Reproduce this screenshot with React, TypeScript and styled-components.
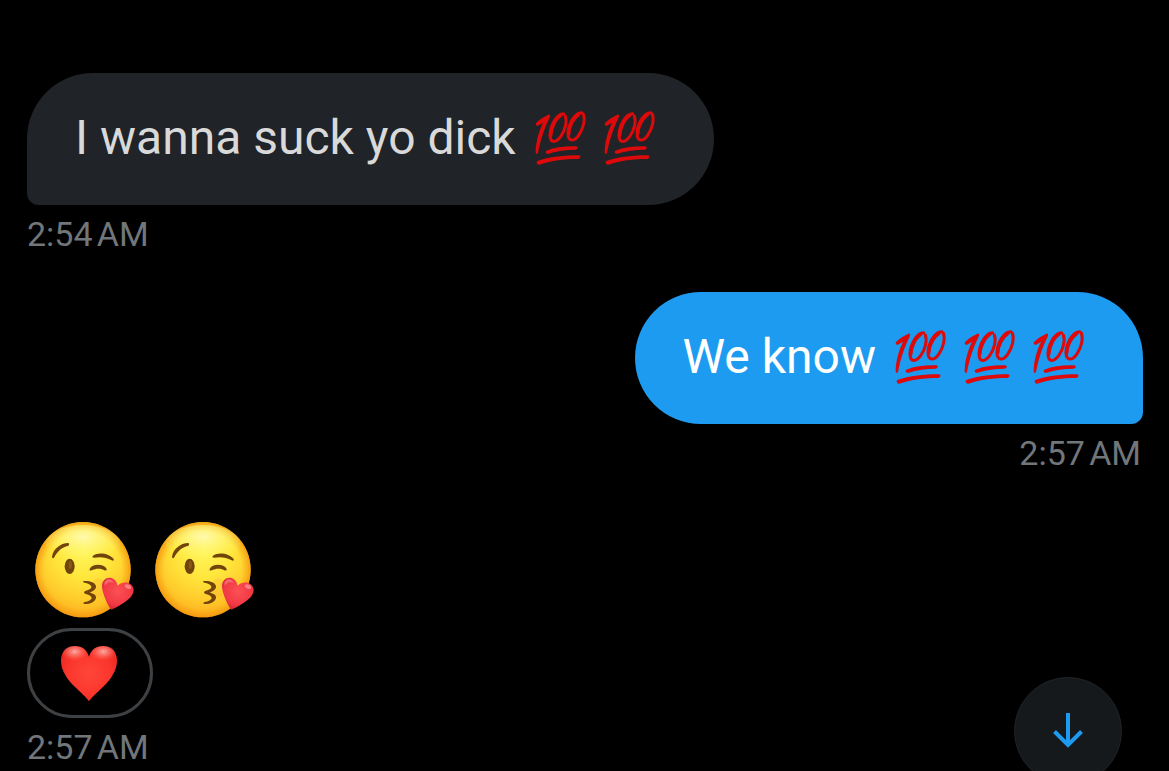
import React from "react";
import styled, { createGlobalStyle } from "styled-components";

const GlobalStyle = createGlobalStyle`
  * { box-sizing: border-box; }
  body { margin: 0; background: #000; font-family: Roboto, "Liberation Sans", sans-serif; }
`;

const Conversation = styled.main`
  display: flex;
  flex-direction: column;
  gap: 38px;
  padding: 73px 26px 0 27px;
`;

const Message = styled.article<{ $sent?: boolean }>`
  display: flex;
  flex-direction: column;
  align-items: ${(p) => (p.$sent ? "flex-end" : "flex-start")};
`;

const Bubble = styled.div<{ $sent?: boolean }>`
  display: flex;
  align-items: center;
  gap: 16px;
  padding: 36px 56px 38px 48px;
  border-radius: ${(p) => (p.$sent ? "66px 66px 12px 66px" : "66px 66px 66px 12px")};
  background: ${(p) => (p.$sent ? "#1d9bf0" : "#202327")};
  color: ${(p) => (p.$sent ? "#fff" : "#d9d9d9")};
  font-size: 48px;
  line-height: 58px;
`;

const EmojiRow = styled.span<{ $gap: number }>`
  display: flex;
  gap: ${(p) => p.$gap}px;
`;

const BigEmoji = styled.div`
  padding: 9px 0 10px 8px;
`;

const Time = styled.time`
  margin-top: 9px;
  padding: 0 2px 0 0;
  color: #71767b;
  font-size: 34px;
  line-height: 40px;
`;

const Reaction = styled.button`
  display: flex;
  align-items: center;
  justify-content: center;
  width: 126px;
  height: 90px;
  padding: 0 2px 0 0;
  border: 3px solid #3e4144;
  border-radius: 45px;
  background: #000;
`;

const ScrollDown = styled.button`
  position: fixed;
  right: 47px;
  bottom: -14px;
  display: flex;
  align-items: center;
  justify-content: center;
  width: 108px;
  height: 108px;
  padding: 0;
  border: 1px solid #202327;
  border-radius: 50%;
  background: #15191c;
`;

const Hundred = () => (
  <svg width="57" height="57" viewBox="0 4 171 171" role="img" aria-label="100">
    <g fill="#dc0a0a">
      <path d="M13 42 C22 32 36 24 49 18 C54 17 56 22 53 27 C38 56 25 94 18 133 C17 137 11 137 11 131 C11 102 20 69 33 42 C28 44 23 48 18 51 C12 53 9 47 13 42Z" />
      <path d="M43 126 C70 115 101 112 133 113 C140 116 138 121 131 123 C102 123 74 127 50 135 C43 137 38 130 43 126Z" />
      <path d="M16 157 C52 144 97 140 142 140 C148 143 146 149 139 151 C97 151 60 155 22 168 C15 169 12 161 16 157Z" />
    </g>
    <g fill="none" stroke="#dc0a0a" strokeLinecap="round" strokeLinejoin="round">
      <path d="M95 15 C73 15 55 53 54 78 C54 105 72 103 86 84 C100 64 106 38 100 22" strokeWidth="9" />
      <path d="M86 20 C69 31 56 60 56 80" strokeWidth="11" />
      <path d="M149 12 C127 13 109 48 108 74 C108 100 126 100 140 80 C155 59 160 32 154 16" strokeWidth="9" />
      <path d="M140 17 C124 27 110 54 110 75" strokeWidth="11" />
    </g>
  </svg>
);

const Kiss = ({ id }: { id: string }) => (
  <svg width="100" height="98" viewBox="21 15 300 294" role="img" aria-label="Face blowing a kiss">
    <defs>
      <radialGradient id={`${id}-skin`} gradientUnits="userSpaceOnUse" cx="168" cy="105" r="215">
        <stop offset="0" stopColor="#fff65c" />
        <stop offset="0.38" stopColor="#ffe63c" />
        <stop offset="0.7" stopColor="#ffcb2b" />
        <stop offset="1" stopColor="#fba51a" />
      </radialGradient>
      <radialGradient id={`${id}-rim`} gradientUnits="userSpaceOnUse" cx="165" cy="166" r="145">
        <stop offset="0.8" stopColor="#f69a10" stopOpacity="0" />
        <stop offset="1" stopColor="#f39009" stopOpacity="0.8" />
      </radialGradient>
      <radialGradient id={`${id}-shine`} cx="0.5" cy="0.3" r="0.65">
        <stop offset="0" stopColor="#fffcc8" stopOpacity="0.8" />
        <stop offset="0.5" stopColor="#fff98c" stopOpacity="0.45" />
        <stop offset="1" stopColor="#fff45a" stopOpacity="0" />
      </radialGradient>
      <radialGradient id={`${id}-heart`} cx="0.5" cy="0.42" r="0.65">
        <stop offset="0" stopColor="#fb5055" />
        <stop offset="0.65" stopColor="#f23a44" />
        <stop offset="1" stopColor="#cc1c2c" />
      </radialGradient>
    </defs>
    <circle cx="165" cy="164" r="143" fill={`url(#${id}-skin)`} />
    <circle cx="165" cy="164" r="143" fill={`url(#${id}-rim)`} />
    <ellipse cx="165" cy="88" rx="112" ry="58" fill={`url(#${id}-shine)`} />
    <ellipse cx="211" cy="218" rx="22" ry="28" fill="#f79038" opacity="0.15" />
    <g fill="#70440b">
      <path d="M72 127 C73 103 98 84 121 84 C125 85 124 91 120 93 C101 97 89 108 78 128 C76 130 72 130 72 127Z" />
      <path d="M195 122 C211 110 244 115 257 132 C259 136 255 139 251 136 C235 126 216 125 198 128 C194 128 192 125 195 122Z" />
      <ellipse cx="125" cy="154" rx="15" ry="23" />
      <path d="M185 162 C193 145 228 146 236 162 C237 167 232 168 228 165 C214 159 203 161 191 166 C187 168 183 166 185 162Z" />
      <path d="M167 198 C188 196 205 204 204 216 C204 223 194 229 185 233 C197 235 205 240 204 248 C202 260 187 267 170 267 C164 266 165 262 170 261 C181 259 191 254 191 248 C190 242 181 238 171 236 C167 234 167 230 172 228 C181 225 191 221 190 216 C190 209 179 204 169 203 C165 202 164 199 167 198Z" />
    </g>
    <ellipse cx="127" cy="150" rx="5" ry="12" fill="#94651a" opacity="0.65" />
    <path d="M248 282 C238 268 223 236 222 214 C221 184 262 177 269 212 C286 195 315 202 317 224 C318 249 278 270 253 283 Q250 285 248 282Z" fill={`url(#${id}-heart)`} />
    <path d="M229 205 C232 190 249 189 257 203 C247 199 236 202 231 213Z" fill="#ffb0b4" opacity="0.4" />
    <ellipse cx="300" cy="215" rx="10" ry="6" transform="rotate(24 300 215)" fill="#ffc0c4" opacity="0.5" />
  </svg>
);

const Heart = () => (
  <svg width="58" height="58" viewBox="0 0 174 174" role="img" aria-label="Red heart">
    <defs>
      <radialGradient id="heart-fill" cx="0.5" cy="0.5" r="0.62">
        <stop offset="0" stopColor="#ff463a" />
        <stop offset="0.6" stopColor="#fb362d" />
        <stop offset="1" stopColor="#e8281f" />
      </radialGradient>
      <radialGradient id="heart-shine" cx="0.5" cy="0.35" r="0.6">
        <stop offset="0" stopColor="#ffc9c2" stopOpacity="0.8" />
        <stop offset="0.5" stopColor="#ff968a" stopOpacity="0.45" />
        <stop offset="1" stopColor="#ff5548" stopOpacity="0" />
      </radialGradient>
    </defs>
    <path d="M87 172 C79 160 63 147 46 130 C20 104 3 78 3 50 C3 22 21 6 45 6 C66 6 81 18 87 38 C93 18 108 6 129 6 C153 6 171 22 171 50 C171 78 154 104 128 130 C111 147 95 160 87 172Z" fill="url(#heart-fill)" />
    <ellipse cx="44" cy="30" rx="36" ry="24" fill="url(#heart-shine)" />
    <ellipse cx="130" cy="30" rx="36" ry="24" fill="url(#heart-shine)" />
  </svg>
);

const ArrowDown = () => (
  <svg width="32" height="36" viewBox="0 0 32 36" fill="none" stroke="#1d9bf0" strokeWidth="4" aria-hidden="true">
    <path d="M16 0V32M2.5 18.5L16 32L29.5 18.5" />
  </svg>
);

export default function App() {
  return (
    <>
      <GlobalStyle />
      <Conversation>
        <Message>
          <Bubble>
            <span>I wanna suck yo dick</span>
            <EmojiRow $gap={12}>
              <Hundred />
              <Hundred />
            </EmojiRow>
          </Bubble>
          <Time dateTime="02:54">2:54{"\u202f"}AM</Time>
        </Message>
        <Message $sent>
          <Bubble $sent>
            <span>We know</span>
            <EmojiRow $gap={12}>
              <Hundred />
              <Hundred />
              <Hundred />
            </EmojiRow>
          </Bubble>
          <Time dateTime="02:57">2:57{"\u202f"}AM</Time>
        </Message>
        <Message>
          <BigEmoji>
            <EmojiRow $gap={20}>
              <Kiss id="kiss-a" />
              <Kiss id="kiss-b" />
            </EmojiRow>
          </BigEmoji>
          <Reaction type="button" aria-label="Heart reaction">
            <Heart />
          </Reaction>
          <Time dateTime="02:57">2:57{"\u202f"}AM</Time>
        </Message>
      </Conversation>
      <ScrollDown type="button" aria-label="Scroll to latest message">
        <ArrowDown />
      </ScrollDown>
    </>
  );
}
